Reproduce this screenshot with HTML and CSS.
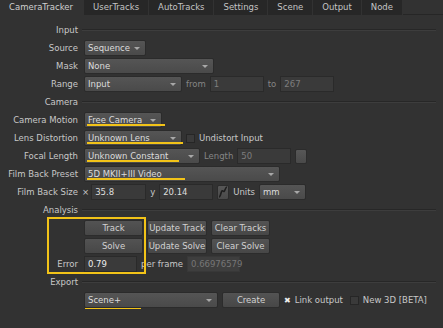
FILE: index.html
```html
<!doctype html>
<html lang="en">
<head>
    <meta charset="utf-8">
    <title>CameraTracker</title>
    <link rel="stylesheet" href="styles.css">
</head>
<body>
<!-- Tabs -->
<div class="tabs">
    <div class="tab active">CameraTracker</div>
    <div class="tab">UserTracks</div>
    <div class="tab">AutoTracks</div>
    <div class="tab">Settings</div>
    <div class="tab">Scene</div>
    <div class="tab">Output</div>
    <div class="tab">Node</div>
    <div class="tab-fill"></div>
</div>

<div class="panel">
    <!-- Input -->
    <div class="row section"><span class="label">Input</span><div class="rule"></div></div>
    <div class="row">
        <span class="label">Source</span>
        <div class="ctrls"><div class="menu w-source">Sequence<span class="arrow"></span></div></div>
    </div>
    <div class="row">
        <span class="label">Mask</span>
        <div class="ctrls"><div class="menu w-mask">None<span class="arrow"></span></div></div>
    </div>
    <div class="row">
        <span class="label">Range</span>
        <div class="ctrls">
            <div class="menu w-range">Input<span class="arrow"></span></div>
            <span class="dim">from</span>
            <div class="field dim w-num">1</div>
            <span class="dim">to</span>
            <div class="field dim w-num">267</div>
        </div>
    </div>

    <!-- Camera -->
    <div class="row section"><span class="label">Camera</span><div class="rule"></div></div>
    <div class="row">
        <span class="label">Camera Motion</span>
        <div class="ctrls">
            <div class="menu w-motion">Free Camera<span class="arrow"></span><span class="mark mark-motion"></span></div>
        </div>
    </div>
    <div class="row">
        <span class="label">Lens Distortion</span>
        <div class="ctrls">
            <div class="menu w-range">Unknown Lens<span class="arrow"></span><span class="mark mark-lens"></span></div>
            <span class="check"></span>
            <span>Undistort Input</span>
        </div>
    </div>
    <div class="row">
        <span class="label">Focal Length</span>
        <div class="ctrls">
            <div class="menu w-focal">Unknown Constant<span class="arrow"></span><span class="mark mark-focal"></span></div>
            <span class="dim">Length</span>
            <div class="field dim w-num">50</div>
            <div class="btn-small"></div>
        </div>
    </div>
    <div class="row">
        <span class="label">Film Back Preset</span>
        <div class="ctrls">
            <div class="menu w-preset">5D MKII+III Video<span class="arrow"></span><span class="mark mark-preset"></span></div>
        </div>
    </div>
    <div class="row">
        <span class="label">Film Back Size</span>
        <div class="ctrls">
            <span class="times">&times;</span>
            <div class="field w-size">35.8</div>
            <span>y</span>
            <div class="field w-num">20.14</div>
            <div class="btn-small link">
                <svg width="10" height="12" viewBox="0 0 10 12">
                    <path d="M1 11 C3 11 3 3 5 5 C7 7 7 1 9 1" fill="none" stroke="#1e1e1e" stroke-width="1.6"/>
                </svg>
            </div>
            <span>Units</span>
            <div class="menu w-units">mm<span class="arrow"></span></div>
        </div>
    </div>

    <!-- Analysis -->
    <div class="row section"><span class="label">Analysis</span><div class="rule"></div></div>
    <div class="group">
        <div class="row">
            <span class="label"></span>
            <div class="ctrls">
                <div class="btn w-main">Track</div>
                <div class="btn w-upd">Update Track</div>
                <div class="btn w-clr">Clear Tracks</div>
            </div>
        </div>
        <div class="row">
            <span class="label"></span>
            <div class="ctrls">
                <div class="btn w-main">Solve</div>
                <div class="btn w-upd">Update Solve</div>
                <div class="btn w-clr">Clear Solve</div>
            </div>
        </div>
        <div class="row">
            <span class="label">Error</span>
            <div class="ctrls">
                <div class="field bright w-err">0.79</div>
                <span>per frame</span>
                <div class="field ro w-err">0.66976579</div>
            </div>
        </div>
        <div class="highlight"></div>
    </div>

    <!-- Export -->
    <div class="row section"><span class="label">Export</span><div class="rule"></div></div>
    <div class="row">
        <span class="label"></span>
        <div class="ctrls">
            <div class="menu w-scene">Scene+<span class="arrow"></span><span class="mark mark-scene"></span></div>
            <div class="btn w-create">Create</div>
            <span class="xmark">&#x2716;</span>
            <span>Link output</span>
            <span class="check spaced"></span>
            <span>New 3D [BETA]</span>
        </div>
    </div>
</div>
</body>
</html>
```

FILE: styles.css
```css
/* CameraTracker properties panel */
body {
    margin: 0;
    background: #323232;
    font: 8.5px "DejaVu Sans", sans-serif;
    color: #c8c8c8;
}

.tabs {
    display: flex;
    height: 15px;
}

.tab {
    padding: 0 9px;
    margin-right: 1px;
    line-height: 15px;
    background: #272727;
    color: #c4c4c4;
}

.tab.active {
    background: #323232;
    color: #cfcfcf;
    margin-right: 2px;
}

.tab-fill {
    flex: 1;
    border-bottom: 1px solid #262626;
}

.panel {
    padding: 6px 7px 0 0;
}

.row {
    display: grid;
    grid-template-columns: 78px 1fr;
    column-gap: 6px;
    height: 18px;
    align-items: center;
}

.label {
    text-align: right;
    white-space: nowrap;
}

.rule {
    margin-left: -2px;
    border-top: 1px solid #272727;
    border-bottom: 1px solid #3d3d3d;
}

.ctrls {
    display: flex;
    align-items: center;
    gap: 4px;
    white-space: nowrap;
}

.dim {
    color: #858585;
}

/* drop-down menus */
.menu {
    position: relative;
    box-sizing: border-box;
    height: 16px;
    display: flex;
    align-items: center;
    justify-content: space-between;
    padding: 0 5px 0 3px;
    background: linear-gradient(#555, #4a4a4a);
    border: 1px solid #2b2b2b;
    border-radius: 2px;
    color: #dcdcdc;
}

.arrow {
    width: 0;
    height: 0;
    border-left: 3px solid transparent;
    border-right: 3px solid transparent;
    border-top: 3px solid #a8a8a8;
}

/* yellow annotation marks */
.mark {
    position: absolute;
    left: 2px;
    bottom: 1px;
    height: 2px;
    background: #f2c318;
}

.mark-motion { width: 78px; }
.mark-lens { width: 96px; }
.mark-focal { width: 92px; }
.mark-preset { width: 98px; }
.mark-scene { width: 56px; left: 0; bottom: -3px; }

.highlight {
    position: absolute;
    left: 47px;
    top: -2px;
    width: 99px;
    height: 57px;
    box-sizing: border-box;
    border: 2px solid #f2c318;
}

.group {
    position: relative;
}

/* text fields */
.field {
    box-sizing: border-box;
    height: 16px;
    line-height: 14px;
    padding: 0 3px;
    background: #3a3a3a;
    border: 1px solid #2a2a2a;
    color: #dedede;
}

.field.dim {
    color: #7e7e7e;
}

.field.bright {
    color: #eeeeee;
}

.field.ro {
    background: #3e3e3e;
    border-color: #383838;
    color: #777;
}

/* buttons */
.btn {
    box-sizing: border-box;
    height: 16px;
    line-height: 14px;
    text-align: center;
    background: linear-gradient(#535353, #474747);
    border: 1px solid #2c2c2c;
    border-radius: 2px;
    color: #d2d2d2;
}

.btn-small {
    box-sizing: border-box;
    width: 12px;
    height: 15px;
    background: linear-gradient(#575757, #4a4a4a);
    border: 1px solid #2c2c2c;
    border-radius: 2px;
}

.btn-small.link {
    display: flex;
    align-items: center;
    justify-content: center;
}

.check {
    box-sizing: border-box;
    width: 9px;
    height: 9px;
    background: #3a3a3a;
    border: 1px solid #262626;
}

.check.spaced {
    margin-left: 3px;
}

.xmark {
    color: #eeeeee;
    font-size: 8px;
}

.times {
    margin-left: -2px;
    margin-right: -2px;
}

/* widths */
.w-source { width: 62px; }
.w-mask { width: 130px; }
.w-range { width: 98px; }
.w-num { width: 54px; }
.w-motion { width: 78px; }
.w-focal { width: 116px; }
.w-preset { width: 196px; }
.w-size { width: 55px; }
.w-units { width: 47px; }
.w-main { width: 59px; }
.w-upd { width: 60px; }
.w-clr { width: 59px; }
.w-err { width: 53px; }
.w-scene { width: 134px; }
.w-create { width: 58px; }
```
